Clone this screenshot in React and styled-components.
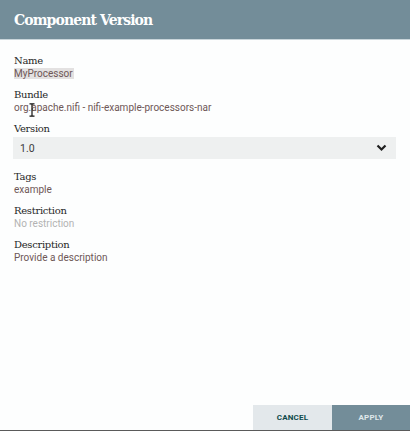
import styled, { createGlobalStyle } from "styled-components";

const GlobalStyle = createGlobalStyle`
  html, body {
    margin: 0;
    padding: 0;
    background: #ffffff;
  }
  #root {
    width: 410px;
    height: 431px;
  }
`;

const Dialog = styled.div`
  width: 410px;
  height: 431px;
  display: flex;
  flex-direction: column;
  background: #fdfefe;
  border-bottom: 1px solid #5a5a5a;
  box-sizing: border-box;
  position: relative;
  overflow: hidden;
`;

const Header = styled.div`
  height: 40px;
  background: #738d99;
  display: flex;
  align-items: center;
  padding-left: 14px;
  border-bottom: 1px solid #c9d5da;
  box-sizing: border-box;
`;

const Title = styled.h1`
  margin: 0;
  font-family: "DejaVu Serif", serif;
  font-weight: bold;
  font-size: 14px;
  letter-spacing: -0.9px;
  color: #ffffff;
`;

const Body = styled.div`
  flex: 1;
  padding: 15px 14px 0 13px;
  display: flex;
  flex-direction: column;
  gap: 8px;
`;

const Field = styled.div`
  display: flex;
  flex-direction: column;
  margin-top: ${(p) => p.$after || 0}px;
`;

const Label = styled.div`
  font-family: "DejaVu Serif", serif;
  font-size: 10px;
  letter-spacing: -0.3px;
  line-height: 12px;
  color: #262626;
  padding-left: 1px;
`;

const Value = styled.div`
  font-family: Roboto, "Liberation Sans", sans-serif;
  font-size: 10px;
  line-height: 14px;
  color: ${(p) => (p.$muted ? "#b3b3b3" : "#6e5756")};
  padding-left: 1px;
  span {
    background: ${(p) => (p.$selected ? "#e3e1e1" : "transparent")};
    padding-right: 1px;
  }
`;

const Select = styled.div`
  margin-top: 2px;
  height: 22px;
  background: #eef0f0;
  display: flex;
  align-items: center;
  justify-content: space-between;
  padding: 0 9px 0 7px;
  font-family: Roboto, "Liberation Sans", sans-serif;
  font-size: 10.5px;
  color: #3b3b3b;
`;

const Footer = styled.div`
  display: flex;
  justify-content: flex-end;
  height: 25px;
`;

const Button = styled.button`
  width: ${(p) => p.$w}px;
  border: none;
  margin: 0;
  font-family: Roboto, "Liberation Sans", sans-serif;
  font-weight: bold;
  font-size: 8px;
  letter-spacing: 0.2px;
  background: ${(p) => (p.$primary ? "#738d99" : "#e3e8eb")};
  color: ${(p) => (p.$primary ? "#dfe7ea" : "#0f4a4a")};
`;

const Cursor = styled.svg`
  position: absolute;
  left: 29px;
  top: 103px;
`;

function Chevron() {
  return (
    <svg width="11" height="8" viewBox="0 0 11 8">
      <path d="M1.5 1.5 L5.5 5.5 L9.5 1.5" fill="none" stroke="#1f1f1f" strokeWidth="2.2" />
    </svg>
  );
}

export default function App() {
  return (
    <>
      <GlobalStyle />
      <Dialog>
        <Header>
          <Title>Component Version</Title>
        </Header>
        <Body>
          <Field>
            <Label>Name</Label>
            <Value $selected>
              <span>MyProcessor</span>
            </Value>
          </Field>
          <Field>
            <Label>Bundle</Label>
            <Value>org.apache.nifi - nifi-example-processors-nar</Value>
          </Field>
          <Field>
            <Label>Version</Label>
            <Select>
              <span>1.0</span>
              <Chevron />
            </Select>
          </Field>
          <Field $after={4}>
            <Label>Tags</Label>
            <Value>example</Value>
          </Field>
          <Field>
            <Label>Restriction</Label>
            <Value $muted>No restriction</Value>
          </Field>
          <Field>
            <Label>Description</Label>
            <Value>Provide a description</Value>
          </Field>
        </Body>
        <Footer>
          <Button $w={79}>CANCEL</Button>
          <Button $w={78} $primary>APPLY</Button>
        </Footer>
        <Cursor width="6" height="14" viewBox="0 0 6 14">
          <path d="M0.5 0.8 H5.5 M3 0.8 V13.2 M0.5 13.2 H5.5" stroke="#111" strokeWidth="1.2" fill="none" />
        </Cursor>
      </Dialog>
    </>
  );
}
